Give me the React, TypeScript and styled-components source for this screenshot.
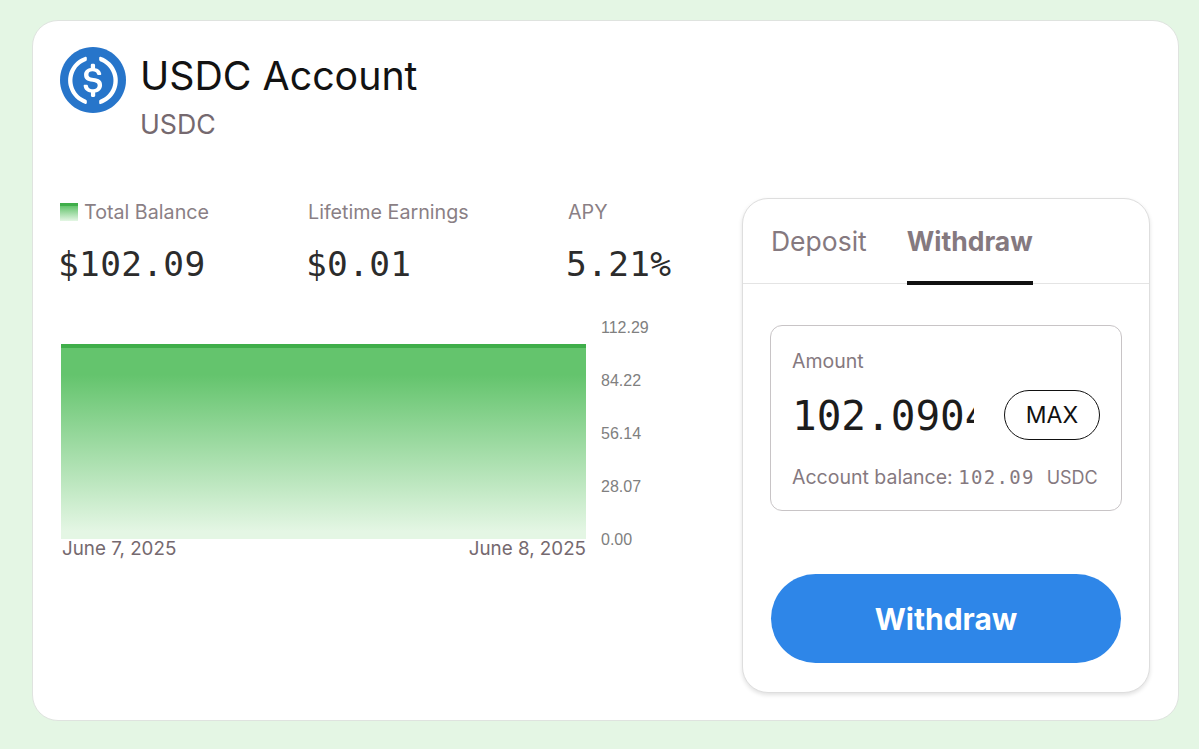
import * as React from "react"
import styled, { createGlobalStyle } from "styled-components"

const GlobalStyle = createGlobalStyle`
  html, body {
    margin: 0;
    padding: 0;
    background: #e4f6e4;
    font-family: Inter, "Liberation Sans", sans-serif;
  }
  * {
    box-sizing: border-box;
  }
`

const MONO = `"DejaVu Sans Mono", "Liberation Mono", monospace`

const Page = styled.main`
  width: 1199px;
  height: 749px;
  padding: 20px 20px 28px 32px;
  overflow: hidden;
`

const Card = styled.section`
  height: 701px;
  background: #ffffff;
  border: 1px solid #dfe3df;
  border-radius: 26px;
  padding: 26px 28px 28px 27px;
`

const AccountHeader = styled.header`
  display: flex;
  align-items: flex-start;
  gap: 14px;
  height: 151px;
`

const TitleBlock = styled.div`
  display: flex;
  flex-direction: column;
  gap: 4px;
`

const Title = styled.h1`
  margin: 0;
  font-size: 39.3px;
  line-height: 58px;
  font-weight: 400;
  color: #121212;
`

const Subtitle = styled.div`
  font-size: 26.7px;
  line-height: 30px;
  color: #75696f;
`

const Body = styled.div`
  display: flex;
  justify-content: space-between;
`

const LeftColumn = styled.div`
  width: 640px;
`

const Stats = styled.div`
  display: grid;
  grid-template-columns: 248px 260px 1fr;
  height: 121px;
`

const StatLabel = styled.div`
  display: flex;
  align-items: center;
  gap: 6px;
  height: 28px;
  font-size: 19.7px;
  color: #8a7f85;
`

const Swatch = styled.span`
  width: 18px;
  height: 18px;
  background: linear-gradient(180deg, #3fae4a 0 3px, #64c46d 3px, #e4f6e4 100%);
`

const StatValue = styled.div`
  margin: 16px 0 0 -2px;
  font-family: ${MONO};
  font-size: 34.5px;
  line-height: 44px;
  letter-spacing: 0.3px;
  color: #2c2c2c;
`

const ChartRow = styled.div`
  display: flex;
  gap: 15px;
`

const ChartMain = styled.div`
  width: 526px;
  padding: 25px 0 0 1px;
`

const Plot = styled.div`
  height: 195px;
  border-top: 4px solid #3fae4a;
  background: linear-gradient(180deg, #64c46d 0%, #64c46d 14%, #e4f6e4 96%);
`

const DateRow = styled.div`
  display: flex;
  justify-content: space-between;
  padding-left: 1px;
  font-size: 18.8px;
  line-height: 19px;
  color: #75696f;
`

const Axis = styled.div`
  display: flex;
  flex-direction: column;
  justify-content: space-between;
  height: 229px;
  font-family: "Liberation Sans", sans-serif;
  font-size: 16px;
  line-height: 17px;
  color: #808080;
`

const Panel = styled.aside`
  width: 408px;
  height: 495px;
  border: 1px solid #dedede;
  border-radius: 26px;
  box-shadow: 0 2px 4px rgba(0, 0, 0, 0.12);
  background: #ffffff;
`

const Tabs = styled.div`
  display: flex;
  gap: 40px;
  height: 85px;
  padding-left: 28px;
  border-bottom: 1px solid #e4e4e4;
`

const Tab = styled.div<{ $active?: boolean }>`
  height: 86px;
  padding-top: 24px;
  font-size: 26.5px;
  line-height: 36px;
  font-weight: ${(p) => (p.$active ? 700 : 400)};
  color: #85797f;
  border-bottom: 4px solid ${(p) => (p.$active ? "#111111" : "transparent")};
`

const PanelBody = styled.div`
  padding: 41px 27px 0 27px;
`

const AmountBox = styled.div`
  height: 186px;
  border: 1.5px solid #c8c4c6;
  border-radius: 12px;
  padding: 22px 21px 0 21px;
`

const AmountLabel = styled.div`
  font-size: 19.5px;
  line-height: 26px;
  color: #85797f;
`

const AmountRow = styled.div`
  display: flex;
  align-items: center;
  justify-content: space-between;
  margin-top: 16px;
`

const AmountInput = styled.input`
  width: 182px;
  height: 50px;
  padding: 2px 0 0;
  border: 0;
  outline: none;
  background: none;
  font-family: ${MONO};
  font-size: 41px;
  line-height: 48px;
  color: #1c1c1c;
`

const MaxButton = styled.button`
  width: 96px;
  height: 50px;
  padding: 0;
  background: none;
  border: 1.5px solid #111111;
  border-radius: 25px;
  font-family: inherit;
  font-size: 23px;
  color: #111111;
`

const BalanceLine = styled.div`
  margin-top: 24px;
  font-size: 19.5px;
  line-height: 26px;
  color: #85797f;
  white-space: nowrap;
`

const BalanceValue = styled.span`
  margin-right: 12px;
  font-family: ${MONO};
  font-size: 19px;
  letter-spacing: 1.3px;
`

const BalanceUnit = styled.span`
  font-size: 18px;
`

const WithdrawButton = styled.button`
  display: block;
  width: 350px;
  height: 89px;
  margin: 63px 0 0 1px;
  background: #2e86e8;
  border: 0;
  border-radius: 45px;
  font-family: inherit;
  font-size: 30px;
  font-weight: 700;
  color: #ffffff;
`

const UsdcLogo = () => (
  <svg width={66} height={66} viewBox='0 0 2000 2000' style={{ flexShrink: 0 }}>
    <path
      fill='#2775ca'
      d='M1000 2000c554.17 0 1000-445.83 1000-1000S1554.17 0 1000 0 0 445.83 0 1000s445.83 1000 1000 1000z'
    />
    <path
      fill='#fff'
      d='M1275 1158.33c0-145.83-87.5-195.83-262.5-216.66-125-16.67-150-50-150-108.34s41.67-95.83 125-95.83c75 0 116.67 25 137.5 87.5 4.17 12.5 16.67 20.83 29.17 20.83h66.66c16.67 0 29.17-12.5 29.17-29.16v-4.17c-16.67-91.67-91.67-162.5-187.5-170.83v-100c0-16.67-12.5-29.17-33.33-33.34h-62.5c-16.67 0-29.17 12.5-33.34 33.34v95.83c-125 16.67-204.16 100-204.16 204.17 0 137.5 83.33 191.66 258.33 212.5 116.67 20.83 154.17 45.83 154.17 112.5s-58.34 112.5-137.5 112.5c-108.34 0-145.84-45.84-158.34-108.34-4.16-16.66-16.66-25-29.16-25h-70.84c-16.66 0-29.16 12.5-29.16 29.17v4.17c16.66 104.16 83.33 179.16 220.83 200v100c0 16.66 12.5 29.16 33.33 33.33h62.5c16.67 0 29.17-12.5 33.34-33.33v-100c125-20.84 208.33-108.34 208.33-220.84z'
    />
    <path
      fill='#fff'
      d='M787.5 1595.83c-325-116.66-491.67-479.16-370.83-800 62.5-175 200-308.33 370.83-370.83 16.67-8.33 25-20.83 25-41.67V325c0-16.67-8.33-29.17-25-33.33-4.17 0-12.5 0-16.67 4.16-395.83 125-612.5 545.84-487.5 941.67 75 233.33 254.17 412.5 487.5 487.5 16.67 8.33 33.34 0 37.5-16.67 4.17-4.16 4.17-8.33 4.17-16.66v-58.34c0-12.5-12.5-29.16-25-37.5zM1229.17 295.83c-16.67-8.33-33.34 0-37.5 16.67-4.17 4.17-4.17 8.33-4.17 16.67v58.33c0 16.67 12.5 33.33 25 41.67 325 116.66 491.67 479.16 370.83 800-62.5 175-200 308.33-370.83 370.83-16.67 8.33-25 20.83-25 41.67V1700c0 16.67 8.33 29.17 25 33.33 4.17 0 12.5 0 16.67-4.16 395.83-125 612.5-545.84 487.5-941.67-75-237.5-258.34-416.67-487.5-491.67z'
    />
  </svg>
)

const axisLabels = ["112.29", "84.22", "56.14", "28.07", "0.00"]

const App = () => {
  return (
    <Page>
      <GlobalStyle />
      <Card>
        <AccountHeader>
          <UsdcLogo />
          <TitleBlock>
            <Title>USDC Account</Title>
            <Subtitle>USDC</Subtitle>
          </TitleBlock>
        </AccountHeader>
        <Body>
          <LeftColumn>
            <Stats>
              <div>
                <StatLabel>
                  <Swatch />
                  Total Balance
                </StatLabel>
                <StatValue>$102.09</StatValue>
              </div>
              <div>
                <StatLabel>Lifetime Earnings</StatLabel>
                <StatValue>$0.01</StatValue>
              </div>
              <div>
                <StatLabel>APY</StatLabel>
                <StatValue>5.21%</StatValue>
              </div>
            </Stats>
            <ChartRow>
              <ChartMain>
                <Plot />
                <DateRow>
                  <span>June 7, 2025</span>
                  <span>June 8, 2025</span>
                </DateRow>
              </ChartMain>
              <Axis>
                {axisLabels.map((label) => (
                  <span key={label}>{label}</span>
                ))}
              </Axis>
            </ChartRow>
          </LeftColumn>
          <Panel>
            <Tabs>
              <Tab>Deposit</Tab>
              <Tab $active>Withdraw</Tab>
            </Tabs>
            <PanelBody>
              <AmountBox>
                <AmountLabel>Amount</AmountLabel>
                <AmountRow>
                  <AmountInput value='102.0904' readOnly />
                  <MaxButton>MAX</MaxButton>
                </AmountRow>
                <BalanceLine>
                  Account balance: <BalanceValue>102.09</BalanceValue>
                  <BalanceUnit>USDC</BalanceUnit>
                </BalanceLine>
              </AmountBox>
              <WithdrawButton>Withdraw</WithdrawButton>
            </PanelBody>
          </Panel>
        </Body>
      </Card>
    </Page>
  )
}

export default App
